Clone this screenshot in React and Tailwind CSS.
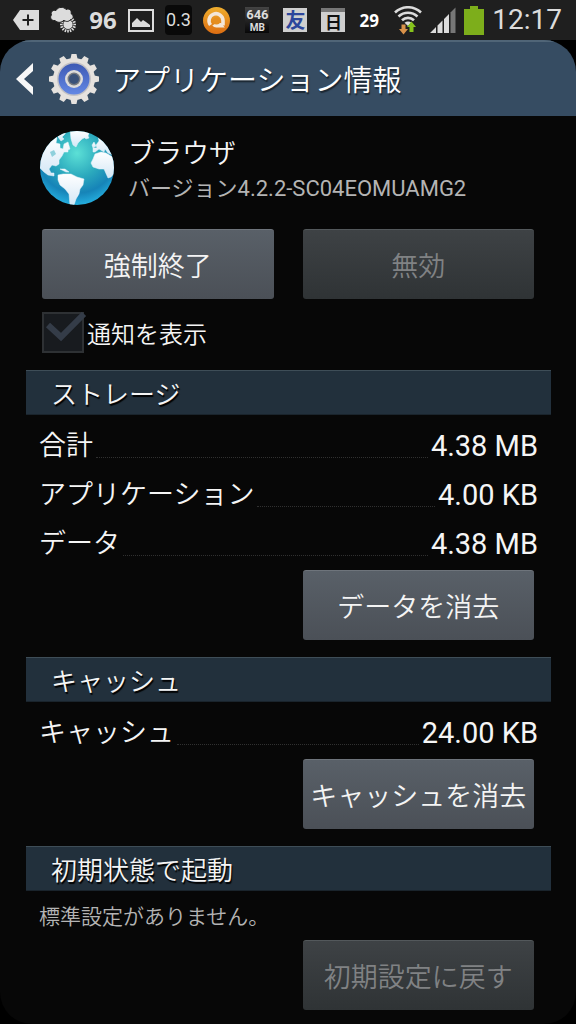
import clsx from "clsx";

const storageRows = [
  { label: "合計", value: "4.38 MB" },
  { label: "アプリケーション", value: "4.00 KB" },
  { label: "データ", value: "4.38 MB" },
];

const cacheRows = [{ label: "キャッシュ", value: "24.00 KB" }];

const gearTeeth = [0, 30, 60, 90, 120, 150, 180, 210, 240, 270, 300, 330];

function StatusBar() {
  return (
    <div className="flex h-10 items-center justify-between bg-[#1f1f1f] pl-[13px] pr-[14px] text-[#dcdcdc]">
      <div className="flex items-center gap-[11px]">
        <svg className="h-[22px] w-[26px]" viewBox="0 0 26 22">
          <path d="M7 1h19v20H7L0 11z" fill="#dcdcdc" />
          <path d="M15 5.500v11M9.500 11h11" stroke="#1f1f1f" strokeWidth="2" />
        </svg>
        <svg className="h-[26px] w-[28px]" viewBox="0 0 28 26">
          <g stroke="#dcdcdc" strokeWidth="1.600">
            <path d="M18 9.500v16M10 17.500h16M12.300 11.800l11.400 11.400M23.700 11.800L12.300 23.200M15 10l6 15M21 10l-6 15M10.500 14.500l15 6M10.500 20.500l15-6" />
          </g>
          <circle cx="18" cy="17.500" r="5" fill="#dcdcdc" stroke="#1f1f1f" strokeWidth="0.800" />
          <path
            d="M5 13.500C1 14-.500 10 1.500 8 0 5 3 2.500 6 3.500 8-.500 14-.500 16 2.500c3-1.500 6 1 5 4 3 1.500 3 6-.500 6-1.500 2.500-5 2.500-6.500.500-2 3-7 3-9 .500z"
            fill="#dcdcdc"
            stroke="#1f1f1f"
            strokeWidth="1"
          />
        </svg>
        <span className="w-[28px] text-center font-['Open_Sans'] text-[24px] font-bold leading-none">96</span>
        <svg className="h-[23px] w-[26px]" viewBox="0 0 26 23">
          <rect x="1" y="1" width="24" height="21" fill="none" stroke="#dcdcdc" strokeWidth="2" />
          <path d="M4 18v-4l5-5 4 4 2-2 3 2 4 3v2z" fill="#dcdcdc" />
        </svg>
        <span className="flex h-[30px] w-[27px] items-center justify-center rounded bg-[#090909] text-[18px] leading-none">
          0.3
        </span>
        <svg className="h-[27px] w-[27px]" viewBox="0 0 27 27">
          <defs>
            <linearGradient id="amber" x1="0" y1="0" x2="0" y2="1">
              <stop offset="0" stopColor="#efae2e" />
              <stop offset="1" stopColor="#dc6d12" />
            </linearGradient>
          </defs>
          <circle cx="13.500" cy="13.500" r="13.500" fill="url(#amber)" />
          <path d="M7.500 18A7 7 0 1 1 20 13.500v5" fill="none" stroke="#f3e6d8" strokeWidth="3.600" />
          <path d="M21.800 20.500h-8.500a6 6 0 0 1-4-2l4-2.500 5 0z" fill="#f3e6d8" />
          <circle cx="13.500" cy="14" r="3.600" fill="#e58e20" />
        </svg>
      </div>
      <div className="flex items-center gap-[14px]">
        <span className="flex h-[26px] w-[24px] flex-col items-center justify-center bg-gradient-to-b from-[#444444] to-[#080808] font-bold">
          <span className="text-[13px] leading-[15px]">646</span>
          <span className="text-[10px] leading-[11px]">MB</span>
        </span>
        <span className="flex h-[24px] w-[24px] items-center justify-center bg-[#cfcfcf] pt-[2px] text-[20px] font-bold leading-none text-[#2c469c]">
          友
        </span>
        <span className="flex h-[24px] w-[24px] items-center justify-center border-t-4 border-[#777777] bg-[#cfcfcf] pt-[2px] text-[17px] font-bold leading-none text-[#111111]">
          日
        </span>
        <span className="font-['Open_Sans'] text-[17px] font-bold leading-none text-white">29</span>
      </div>
      <div className="flex items-center gap-[8px]">
        <svg className="h-[29px] w-[28px]" viewBox="0 0 28 29">
          <g fill="none" stroke="#dcdcdc" strokeWidth="2.600">
            <path d="M1 6.500C8.500-.500 19.500-.500 27 6.500" />
            <path d="M4.500 10.500c5.500-5 13.500-5 19 0" />
            <path d="M8 14.300c3.500-3.300 8.500-3.300 12 0" />
          </g>
          <path d="M10.500 16.800c2-1.600 5-1.600 7 0L14 20z" fill="#dcdcdc" />
          <path d="M7.500 18.500h4V23H14l-4.500 5.500L5 23h2.500z" fill="#d9924a" />
          <path d="M15.500 26v-5H13l4.500-5.500L22 21h-2.500v5z" fill="#86c31c" />
        </svg>
        <svg className="h-[26px] w-[26px]" viewBox="0 0 26 26">
          <path d="M0 26l6-6v6zM7.500 26v-7.500l5-5V26zM14 26V12l5-5v19z" fill="#dcdcdc" />
          <path d="M20.500 26V5.500l5-5V26z" fill="#777777" />
        </svg>
        <svg className="h-[29px] w-[20px]" viewBox="0 0 20 29">
          <path d="M6 0h8v3h6v26H0V3h6z" fill="#7dae1b" />
        </svg>
        <span className="text-[28px] leading-none">12:17</span>
      </div>
    </div>
  );
}

function GearIcon() {
  return (
    <svg className="h-[50px] w-[50px]" viewBox="0 0 50 50">
      <defs>
        <linearGradient id="ring" x1="0" y1="0" x2="0" y2="1">
          <stop offset="0" stopColor="#3d59b4" />
          <stop offset="1" stopColor="#6488e4" />
        </linearGradient>
      </defs>
      {gearTeeth.map((angle) => (
        <path key={angle} d="M21 7l1.500-7h5L29 7z" fill="#e6e2de" transform={`rotate(${angle} 25 25)`} />
      ))}
      <circle cx="25" cy="25" r="21" fill="#e6e2de" />
      <circle cx="25" cy="25" r="17" fill="#c4c2c4" />
      <circle cx="25" cy="25" r="15.500" fill="url(#ring)" />
      <circle cx="25" cy="25" r="9" fill="#dedcda" />
      <circle cx="25" cy="25" r="6.500" fill="#777a80" />
      <circle cx="25" cy="25" r="5" fill="#3b5279" />
    </svg>
  );
}

function GlobeIcon() {
  return (
    <svg className="h-[74px] w-[74px] shrink-0" viewBox="0 0 74 74">
      <defs>
        <radialGradient id="sea" cx="0.5" cy="0.3" r="0.72">
          <stop offset="0" stopColor="#5ce0d6" />
          <stop offset="0.45" stopColor="#2ba9bd" />
          <stop offset="0.75" stopColor="#1684b8" />
          <stop offset="1" stopColor="#27b4e4" />
        </radialGradient>
        <linearGradient id="land" x1="0" y1="0" x2="0" y2="1">
          <stop offset="0" stopColor="#ffffff" />
          <stop offset="1" stopColor="#d3e7f6" />
        </linearGradient>
        <clipPath id="disc">
          <circle cx="37" cy="37" r="37" />
        </clipPath>
      </defs>
      <g clipPath="url(#disc)">
        <rect width="74" height="74" fill="url(#sea)" />
        <g fill="url(#land)" stroke="#e9f5fa" strokeWidth="0.500" strokeLinejoin="round">
          <path d="M-2 30L4 14 14 4l3 3-1 5 4 1 0 4 3 1 1-5 4-2 2 7-2 1 0 2-4 0-2 4-3 4 0 4-3 2-4-1-3 4 2 4 3 0 0 3-6-1-4-3-4-4z" />
          <path d="M30-1h20l-2 6-6 3-4 4-2 4-3-2-2-6z" />
          <path d="M18 2l8-2-1 3-3 3 2 2-3 2-3-4z" />
          <path d="M44 6l4-1 1 2-3 1z" />
          <path d="M20 38l5 0 4 3-3 0z" />
          <path d="M18 44L23 43 31 43 37 46 44 48 43 54 40 58 39 63 36 68 34 74 30 74 29 63 25 58 20 54 18 49z" />
          <path d="M53 28l2-5 6-2 5 1 5 3 5 2v13l-5 6-3 1-4-9-5 0-6-2-2-4z" />
          <path d="M53 21l0-4 4 0-1-3 3-4-1-5 3-1 4 4 6 9 4 8-7-3-3-4-1 3-5-3-4 3z" />
          <path d="M52 14l2-3 2 4-3 2z" />
        </g>
        <path d="M10 21l4-2 2 4-4 3z" fill="#8fd0dc" />
      </g>
    </svg>
  );
}

function PanelButton({ children, disabled, className }) {
  return (
    <button
      type="button"
      disabled={disabled}
      className={clsx(
        "h-[70px] whitespace-nowrap rounded-[3px] border-t pt-[6px] text-[27px] font-[350]",
        disabled
          ? "border-[#53585b] bg-gradient-to-b from-[#3e4245] to-[#2f3335] text-[#808284]"
          : "border-[#6e747b] bg-gradient-to-b from-[#596068] to-[#4b5057] text-[#f4f4f4]",
        className
      )}
    >
      {children}
    </button>
  );
}

function Section({ title, children }) {
  return (
    <section>
      <h2 className="flex h-[45px] items-center border-b border-t border-b-[#1a242c] border-t-[#3e4d57] bg-[#22303c] px-[25px] pt-[4px] text-[26px] font-[350] text-[#f5f5f5] [text-shadow:1px_2px_1px_#000000]">
        {title}
      </h2>
      {children}
    </section>
  );
}

function SizeList({ rows }) {
  return (
    <dl className="px-[13px] pt-[5px]">
      {rows.map((row) => (
        <div key={row.label} className="flex h-[49px] items-center pt-[4px] text-[27px] text-[#f5f5f5]">
          <dt className="font-[350]">{row.label}</dt>
          <span className="mx-[3px] mb-[11px] flex-1 self-end border-b border-dotted border-[#303030]" />
          <dd className="text-[29px]">{row.value}</dd>
        </div>
      ))}
    </dl>
  );
}

export default function App() {
  return (
    <div className="min-h-screen bg-black font-['Roboto','Noto_Sans_CJK_JP',sans-serif] leading-none">
      <StatusBar />
      <div className="overflow-hidden rounded-[32px] bg-[#070707]">
        <header className="flex h-[76px] items-center border-t-2 border-[#506577] bg-[#364c62] pl-4">
          <button type="button" aria-label="戻る">
            <svg className="h-[32px] w-[18px]" viewBox="0 0 18 32">
              <path d="M17 0v8L8 16l9 8v8L0 16z" fill="#f7f7f7" />
            </svg>
          </button>
          <span className="ml-[15px]">
            <GearIcon />
          </span>
          <h1 className="ml-[13px] pt-[4px] text-[29px] font-[350] text-white [text-shadow:1px_2px_1px_#1c2833]">
            アプリケーション情報
          </h1>
        </header>

        <main className="flex flex-col pb-[14px] pl-[26px] pr-[25px] pt-[15px]">
          <div className="flex gap-[14px] pl-[14px]">
            <GlobeIcon />
            <div className="pt-[10px]">
              <p className="text-[27px] font-[350] text-[#f5f5f5]">ブラウザ</p>
              <p className="mt-[10px] text-[22px] text-[#b4b4b4]">バージョン4.2.2-SC04EOMUAMG2</p>
            </div>
          </div>

          <div className="mt-[24px] grid grid-cols-2 gap-[29px] pl-[16px] pr-[17px]">
            <PanelButton>強制終了</PanelButton>
            <PanelButton disabled>無効</PanelButton>
          </div>

          <label className="mb-[17px] mt-[13px] flex items-center gap-[3px] pl-[16px] text-[24px] font-[350] text-[#f5f5f5]">
            <span className="relative h-[41px] w-[42px]">
              <input
                type="checkbox"
                defaultChecked
                className="block h-full w-full appearance-none border-2 border-[#2e3134] bg-[#181b1f]"
              />
              <svg className="pointer-events-none absolute left-[3px] top-0 h-[30px] w-[42px]" viewBox="0 0 42 30">
                <path d="M3 13l13 12L39 2" fill="none" stroke="#343c48" strokeWidth="6" />
              </svg>
            </span>
            <span className="pt-[4px]">通知を表示</span>
          </label>

          <div className="flex flex-col gap-[17px]">
            <Section title="ストレージ">
              <SizeList rows={storageRows} />
              <div className="mt-[3px] grid grid-cols-2 gap-[29px] pl-[16px] pr-[17px]">
                <PanelButton className="col-start-2">データを消去</PanelButton>
              </div>
            </Section>

            <Section title="キャッシュ">
              <SizeList rows={cacheRows} />
              <div className="mt-[3px] grid grid-cols-2 gap-[29px] pl-[16px] pr-[17px]">
                <PanelButton className="col-start-2">キャッシュを消去</PanelButton>
              </div>
            </Section>

            <Section title="初期状態で起動">
              <p className="flex h-[49px] items-center px-[13px] pt-[4px] text-[21px] font-[350] text-[#b4b4b4]">
                標準設定がありません。
              </p>
              <div className="grid grid-cols-2 gap-[29px] pl-[16px] pr-[17px]">
                <PanelButton disabled className="col-start-2">
                  初期設定に戻す
                </PanelButton>
              </div>
            </Section>
          </div>
        </main>
      </div>
    </div>
  );
}
